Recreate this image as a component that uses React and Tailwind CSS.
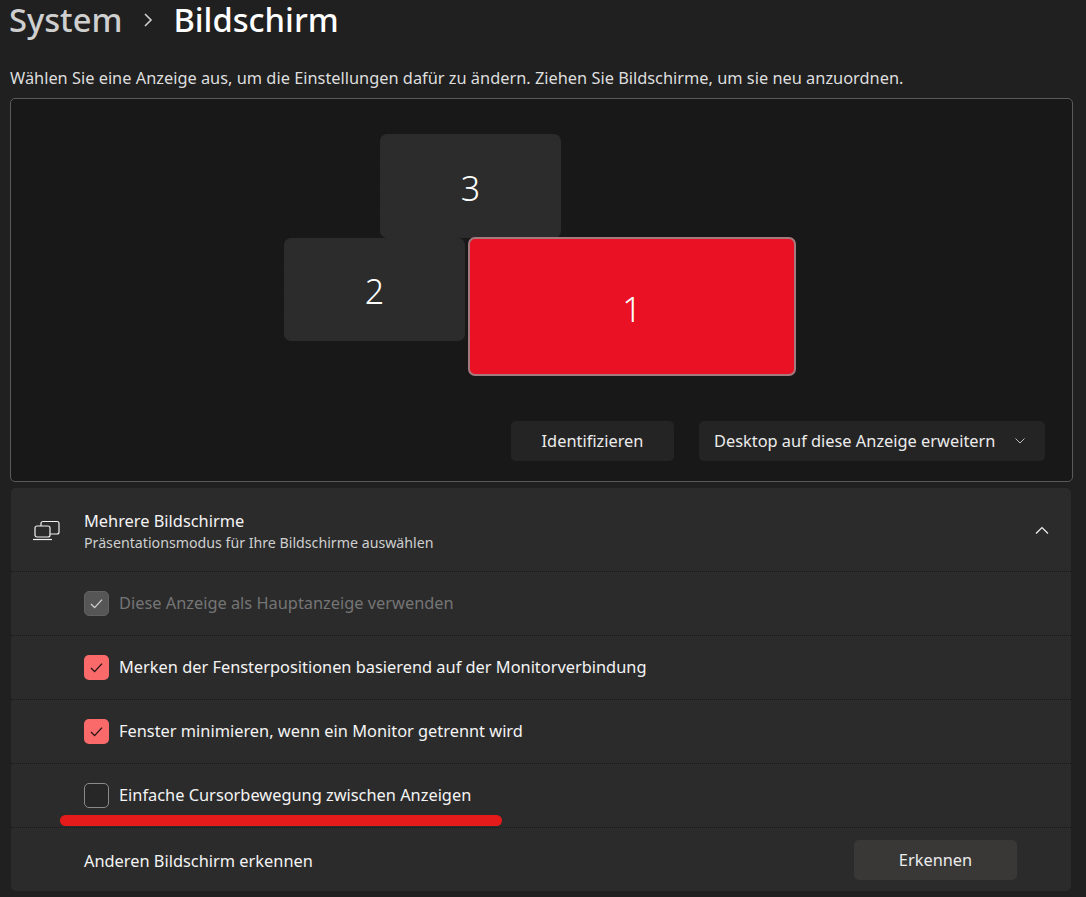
function Check({ state }) {
  const base = "w-[25px] h-[25px] rounded-[5px] flex items-center justify-center shrink-0";
  if (state === "on")
    return (
      <div className={`${base} bg-[#fb6a6a]`}>
        <svg width="15" height="15" viewBox="0 0 15 15" fill="none" stroke="#1f1414" strokeWidth="1.3"><path d="M2 8l3.6 3.6L13 3.6" /></svg>
      </div>
    );
  if (state === "disabled")
    return (
      <div className={`${base} bg-[#565656] border border-[#616161]`}>
        <svg width="15" height="15" viewBox="0 0 15 15" fill="none" stroke="#d2d2d2" strokeWidth="1.3"><path d="M2 8l3.6 3.6L13 3.6" /></svg>
      </div>
    );
  return <div className={`${base} bg-[#272727] border-[1.5px] border-[#8a8a8a]`} />;
}

function Row({ state, children, muted }) {
  return (
    <div className="h-16 flex items-center pl-[73px] gap-[10px] border-t border-dotted border-[#181818]">
      <Check state={state} />
      <span className={`text-[16.37px] ${muted ? "text-[#757575]" : "text-[#f4f4f4]"}`}>{children}</span>
    </div>
  );
}

function Monitor({ n, className }) {
  return (
    <div className={`absolute flex items-center justify-center rounded-[7px] text-[34px] font-light text-white ${className}`}>{n}</div>
  );
}

const grey = "pt-[4px] bg-[#2c2c2c] bg-[radial-gradient(#2a2a2a_0.7px,transparent_0.8px)] bg-[length:3px_3px]";

export default function App() {
  return (
    <div className="relative h-[897px] w-[1086px] overflow-hidden bg-[#202020] text-white font-['Noto_Sans','Open_Sans',sans-serif]">
      <div className="h-[40px] pl-[9px] flex items-center text-[32.7px] font-medium leading-[40px]">
        <span className="text-[#cfcfcf]">System</span>
        <svg className="ml-[19px] mr-[18px]" width="14" height="14" viewBox="0 0 14 14" fill="none" stroke="#cfcfcf" strokeWidth="1.6"><path d="M4 1l6 6-6 6" /></svg>
        <span>Bildschirm</span>
      </div>
      <p className="mt-[26px] ml-[10px] h-[24px] text-[16.37px] leading-[24px] text-[#dedede]">
        Wählen Sie eine Anzeige aus, um die Einstellungen dafür zu ändern. Ziehen Sie Bildschirme, um sie neu anzuordnen.
      </p>

      <section className="relative mt-[8px] ml-[10px] w-[1063px] h-[384px] rounded-[5px] border border-[#5a5a5a] bg-[#181818]">
        <Monitor n="3" className={`left-[369px] top-[35px] w-[181px] h-[104px] ${grey}`} />
        <Monitor n="2" className={`left-[273px] top-[139px] w-[181px] h-[103px] ${grey}`} />
        <Monitor n="1" className="left-[457px] top-[138px] w-[328px] h-[139px] pt-[6px] bg-[#e91123] border-2 border-[#a57a7e]" />
        <div className="absolute right-[27px] top-[322px] flex gap-[25px] text-[16.37px] text-[#ececec]">
          <div className="w-[163px] h-[40px] rounded-[5px] bg-[#242424] flex items-center justify-center">Identifizieren</div>
          <div className="w-[346px] h-[40px] rounded-[5px] bg-[#242424] flex items-center pl-[15px] justify-between pr-[19px]">
            <span>Desktop auf diese Anzeige erweitern</span>
            <svg width="12" height="12" viewBox="0 0 12 12" fill="none" stroke="#bdbdbd" strokeWidth="1"><path d="M1.5 3.5L6 8l4.5-4.5" /></svg>
          </div>
        </div>
      </section>

      <section className="mt-[6px] ml-[11px] w-[1060px] h-[403px] rounded-[5px] bg-[#2b2b2b]">
        <div className="h-[83px] flex items-center pl-[21px] pr-[21px]">
          <svg width="28" height="24" viewBox="0 0 28 24" fill="none" stroke="#f2f2f2" strokeWidth="1.2">
            <path d="M9 8V5.5a2 2 0 012-2h14a2 2 0 012 2V14a2 2 0 01-2 2h-7" />
            <rect x="3" y="8" width="15" height="11" rx="2" />
            <path d="M1 21.5h19" />
          </svg>
          <div className="ml-[24px] pt-[3px]">
            <div className="text-[16.37px] leading-[22px] text-[#f4f4f4]">Mehrere Bildschirme</div>
            <div className="text-[14.2px] leading-[21px] text-[#cfcfcf]">Präsentationsmodus für Ihre Bildschirme auswählen</div>
          </div>
          <svg className="ml-auto" width="16" height="16" viewBox="0 0 16 16" fill="none" stroke="#f2f2f2" strokeWidth="1.2"><path d="M2 11.5L8 5.5l6 6" /></svg>
        </div>
        <Row state="disabled" muted>Diese Anzeige als Hauptanzeige verwenden</Row>
        <Row state="on">Merken der Fensterpositionen basierend auf der Monitorverbindung</Row>
        <Row state="on">Fenster minimieren, wenn ein Monitor getrennt wird</Row>
        <Row state="off">Einfache Cursorbewegung zwischen Anzeigen</Row>
        <div className="h-16 flex items-center pl-[73px] pr-[54px] justify-between border-t border-dotted border-[#181818]">
          <span className="text-[16.37px] text-[#f4f4f4] pt-[3px]">Anderen Bildschirm erkennen</span>
          <div className="w-[163px] h-[40px] rounded-[5px] bg-[#393836] flex items-center justify-center text-[16.37px] text-[#ececec] pt-[1px]">Erkennen</div>
        </div>
      </section>

      <div className="absolute left-[60px] top-[815px] w-[442px] h-[11px] rounded-full bg-[#e51b1b]" />
    </div>
  );
}
